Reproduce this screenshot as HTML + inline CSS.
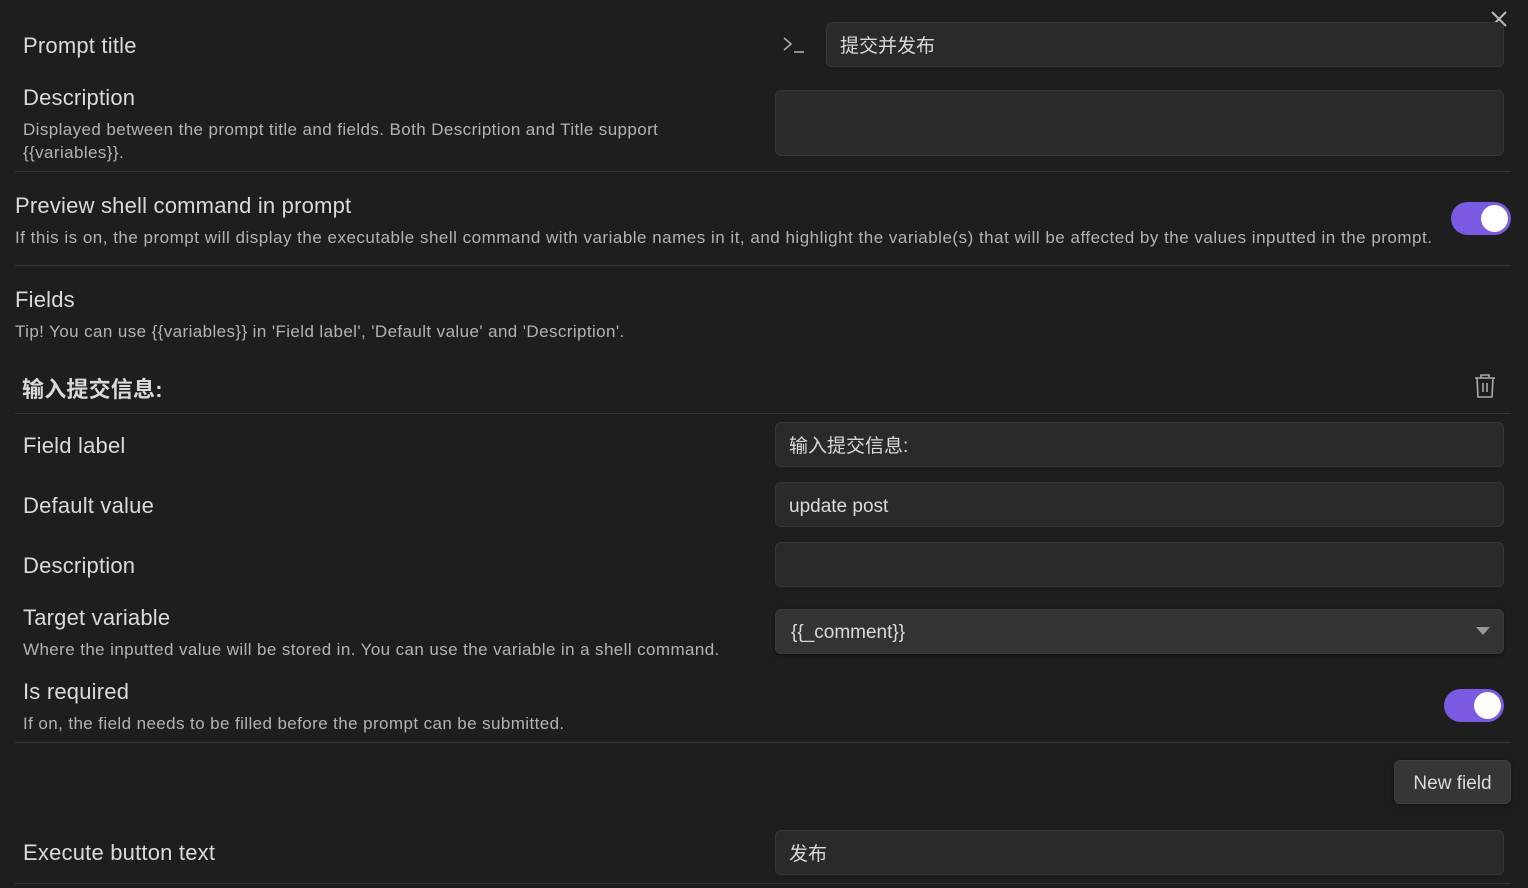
<!DOCTYPE html>
<html><head><meta charset="utf-8"><style>
html,body{margin:0;padding:0;background:#1e1e1e;width:1528px;height:888px;overflow:hidden;font-family:"Liberation Sans","Noto Sans CJK SC",sans-serif;color:#dadada}
.a{position:absolute;white-space:nowrap}
.t{font-size:22px;letter-spacing:0.2px;color:#dadada;margin-top:2px}
.d{font-size:17px;letter-spacing:0.4px;color:#b3b3b3;margin-top:2px}
.in{position:absolute;background:#2a2a2a;border:1px solid #363636;border-radius:6px;box-sizing:border-box;font-size:19px;color:#dadada;padding-left:13px;display:flex;align-items:center}
.hr{position:absolute;height:1px;background:#363636}
.tg{position:absolute;width:60px;height:33px;border-radius:17px;background:#7a5ae0}
.tg::after{content:"";position:absolute;right:3px;top:3px;width:27px;height:27px;border-radius:50%;background:#fff}
</style></head><body>
<svg class="a" style="left:1490px;top:10px" width="18" height="18" viewBox="0 0 18 18"><path d="M2 2L16 16M16 2L2 16" stroke="#bbb" stroke-width="2"/></svg>
<div class="a t" style="left:23px;top:31px">Prompt title</div>
<svg class="a" style="left:782px;top:35px" width="24" height="20" viewBox="0 0 24 20"><path d="M2 3L9 9L2 15" stroke="#aaa" stroke-width="1.6" fill="none"/><path d="M12 17H22" stroke="#aaa" stroke-width="1.6"/></svg>
<div class="in" style="left:826px;top:22px;width:678px;height:45px">提交并发布</div>
<div class="a t" style="left:23px;top:83px">Description</div>
<div class="a d" style="left:23px;top:118px">Displayed between the prompt title and fields. Both Description and Title support</div>
<div class="a d" style="left:23px;top:141px">{{variables}}.</div>
<div class="in" style="left:775px;top:90px;width:729px;height:66px"></div>
<div class="hr" style="left:15px;top:171px;width:1496px"></div>
<div class="a t" style="left:15px;top:191px">Preview shell command in prompt</div>
<div class="a d" style="left:15px;top:226px;letter-spacing:0.5px">If this is on, the prompt will display the executable shell command with variable names in it, and highlight the variable(s) that will be affected by the values inputted in the prompt.</div>
<div class="tg" style="left:1451px;top:202px"></div>
<div class="hr" style="left:15px;top:265px;width:1496px"></div>
<div class="a t" style="left:15px;top:285px">Fields</div>
<div class="a d" style="left:15px;top:320px">Tip! You can use {{variables}} in 'Field label', 'Default value' and 'Description'.</div>
<div class="a t" style="left:22px;top:370px;font-weight:bold">输入提交信息:</div>
<svg class="a" style="left:1473px;top:373px" width="24" height="26" viewBox="0 0 24 26"><path d="M2 5H22M8 5V2H16V5M4 5L5 24H19L20 5M10 10V19M14 10V19" stroke="#aaa" stroke-width="1.6" fill="none"/></svg>
<div class="hr" style="left:15px;top:413px;width:1496px"></div>
<div class="a t" style="left:23px;top:431px">Field label</div>
<div class="in" style="left:775px;top:422px;width:729px;height:45px">输入提交信息:</div>
<div class="a t" style="left:23px;top:491px">Default value</div>
<div class="in" style="left:775px;top:482px;width:729px;height:45px;padding-top:4px">update post</div>
<div class="a t" style="left:23px;top:551px">Description</div>
<div class="in" style="left:775px;top:542px;width:729px;height:45px"></div>
<div class="a t" style="left:23px;top:603px">Target variable</div>
<div class="a d" style="left:23px;top:638px">Where the inputted value will be stored in. You can use the variable in a shell command.</div>
<div class="in" style="left:775px;top:609px;width:729px;height:45px;background:#333;border-color:#3a3a3a;box-shadow:0 1px 3px rgba(0,0,0,.5);padding-left:15px;padding-top:2px">{{_comment}}</div>
<svg class="a" style="left:1476px;top:627px" width="14" height="8"><path d="M0 0H14L7 8Z" fill="#999"/></svg>
<div class="a t" style="left:23px;top:677px">Is required</div>
<div class="a d" style="left:23px;top:712px">If on, the field needs to be filled before the prompt can be submitted.</div>
<div class="tg" style="left:1444px;top:689px"></div>
<div class="hr" style="left:15px;top:742px;width:1496px"></div>
<div class="a" style="left:1394px;top:760px;width:117px;height:44px;background:#363636;border:1px solid #3f3f3f;box-sizing:border-box;border-radius:6px;font-size:19px;display:flex;align-items:center;justify-content:center;box-shadow:0 1px 3px rgba(0,0,0,.5);padding-top:4px">New field</div>
<div class="a t" style="left:23px;top:838px">Execute button text</div>
<div class="in" style="left:775px;top:830px;width:729px;height:45px">发布</div>
<div class="hr" style="left:15px;top:883px;width:1496px"></div>
</body></html>
